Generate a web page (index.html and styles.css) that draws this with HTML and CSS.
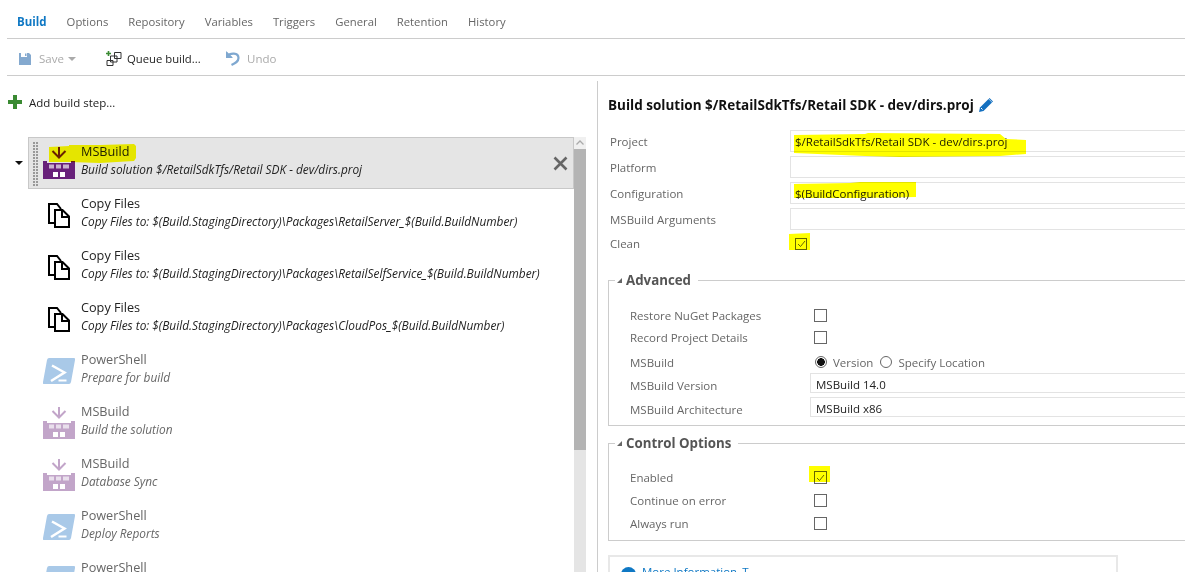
FILE: index.html
```html
<!DOCTYPE html>
<html lang="en">
<head>
<meta charset="utf-8">
<title>Build definition</title>
<link rel="stylesheet" href="styles.css">
</head>
<body>
<svg class="defs" width="0" height="0" aria-hidden="true">
  <symbol id="i-msbuild" viewBox="0 0 32 32">
    <path d="M16 0V10M9.5 4L16 10.5L22.5 4" fill="none" stroke="#68217a" stroke-width="2"/>
    <path d="M0 14H4V16H28V14H32V32H0Z" fill="#68217a"/>
    <path d="M6 17.500H11V21.500H6ZM13 17.500H18V21.500H13ZM20 17.500H26V21.500H20Z" fill="#c9b0d0"/>
    <path d="M10 25H15V30H10ZM17 25H22V30H17Z" fill="#fff"/>
  </symbol>
  <symbol id="i-copy" viewBox="0 0 22 25">
    <path d="M6 20H1V1H9L13 6" fill="none" stroke="#000" stroke-width="2"/>
    <path d="M7 7H14.500L21 13.500V24H7Z" fill="#fff" stroke="#000" stroke-width="2"/>
    <path d="M14 7V14H21" fill="none" stroke="#000" stroke-width="2"/>
  </symbol>
  <symbol id="i-ps" viewBox="0 0 32 26">
    <path d="M6 0H31Q32.500 0 32 2L28 24Q27.500 26 26 26H1Q-.5 26 0 24L4 2Q4.500 0 6 0Z" fill="#a9c9e8"/>
    <path d="M9 7.500L21.500 14.500L8 23" fill="none" stroke="#fff" stroke-width="2.500"/>
    <path d="M15.500 22.500H23.500" fill="none" stroke="#fff" stroke-width="2"/>
  </symbol>
</svg>

<div class="page">
  <nav class="tabs">
    <span class="tab tab-active">Build</span>
    <span class="tab">Options</span>
    <span class="tab">Repository</span>
    <span class="tab">Variables</span>
    <span class="tab">Triggers</span>
    <span class="tab">General</span>
    <span class="tab">Retention</span>
    <span class="tab">History</span>
  </nav>

  <div class="toolbar">
    <span class="tool tool-save">
      <svg class="tool-icon" width="12" height="12" viewBox="0 0 12 12"><path d="M0 0H2V4H8V0H10L12 2V12H0Z" fill="#84a9cf"/><path d="M6 .5H7.500V3H6Z" fill="#84a9cf"/></svg>
      <span class="muted">Save</span>
      <span class="caret"></span>
    </span>
    <span class="tool tool-queue">
      <svg class="tool-icon" width="16" height="15" viewBox="0 0 16 15"><path d="M2.500 0V5M0 2.500H5" stroke="#3a8a32" stroke-width="1.600" fill="none"/><path d="M8.500 1.500H15V7.500H8.500ZM4.500 5H11V11H4.500ZM1 9.500H7V14.500H1Z" fill="#fff" stroke="#333" stroke-width="1"/></svg>
      <span>Queue build...</span>
    </span>
    <span class="tool tool-undo">
      <svg class="tool-icon" width="14" height="15" viewBox="0 0 14 15"><path d="M1 1V6H6" fill="#7fa8d0"/><path d="M1.500 5.500C4 1.500 12.500 1.500 12.500 7C12.500 10.500 9.500 12 5.500 14" fill="none" stroke="#7fa8d0" stroke-width="2.200"/><path d="M0 0L7 7H0Z" fill="#7fa8d0"/></svg>
      <span class="muted">Undo</span>
    </span>
  </div>

  <div class="main">
    <section class="left">
      <div class="add-step">
        <svg width="14" height="14" viewBox="0 0 14 14"><path d="M5 0H9V5H14V9H9V14H5V9H0V5H5Z" fill="#3a8a32"/></svg>
        <span>Add build step...</span>
      </div>
      <div class="list-wrap">
        <div class="twisty"><span class="twisty-arrow"></span></div>
        <div class="steps">
          <div class="step step-selected">
            <span class="grip"></span>
            <div class="step-icon"><svg width="32" height="32"><use href="#i-msbuild"/></svg></div>
            <div class="step-text">
              <div class="step-title">MSBuild</div>
              <div class="step-sub">Build solution $/RetailSdkTfs/Retail SDK - dev/dirs.proj</div>
            </div>
            <svg class="step-close" width="15" height="15" viewBox="0 0 15 15"><path d="M1.500 1.500L13.500 13.500M13.500 1.500L1.500 13.500" stroke="#666" stroke-width="2.600" fill="none"/></svg>
          </div>
          <div class="step">
            <div class="step-icon"><svg width="22" height="25"><use href="#i-copy"/></svg></div>
            <div class="step-text">
              <div class="step-title">Copy Files</div>
              <div class="step-sub">Copy Files to: $(Build.StagingDirectory)\Packages\RetailServer_$(Build.BuildNumber)</div>
            </div>
          </div>
          <div class="step">
            <div class="step-icon"><svg width="22" height="25"><use href="#i-copy"/></svg></div>
            <div class="step-text">
              <div class="step-title">Copy Files</div>
              <div class="step-sub">Copy Files to: $(Build.StagingDirectory)\Packages\RetailSelfService_$(Build.BuildNumber)</div>
            </div>
          </div>
          <div class="step">
            <div class="step-icon"><svg width="22" height="25"><use href="#i-copy"/></svg></div>
            <div class="step-text">
              <div class="step-title">Copy Files</div>
              <div class="step-sub">Copy Files to: $(Build.StagingDirectory)\Packages\CloudPos_$(Build.BuildNumber)</div>
            </div>
          </div>
          <div class="step step-dim">
            <div class="step-icon"><svg width="32" height="26"><use href="#i-ps"/></svg></div>
            <div class="step-text">
              <div class="step-title">PowerShell</div>
              <div class="step-sub">Prepare for build</div>
            </div>
          </div>
          <div class="step step-dim">
            <div class="step-icon icon-faded"><svg width="32" height="32"><use href="#i-msbuild"/></svg></div>
            <div class="step-text">
              <div class="step-title">MSBuild</div>
              <div class="step-sub">Build the solution</div>
            </div>
          </div>
          <div class="step step-dim">
            <div class="step-icon icon-faded"><svg width="32" height="32"><use href="#i-msbuild"/></svg></div>
            <div class="step-text">
              <div class="step-title">MSBuild</div>
              <div class="step-sub">Database Sync</div>
            </div>
          </div>
          <div class="step step-dim">
            <div class="step-icon"><svg width="32" height="26"><use href="#i-ps"/></svg></div>
            <div class="step-text">
              <div class="step-title">PowerShell</div>
              <div class="step-sub">Deploy Reports</div>
            </div>
          </div>
          <div class="step step-dim">
            <div class="step-icon"><svg width="32" height="26"><use href="#i-ps"/></svg></div>
            <div class="step-text">
              <div class="step-title">PowerShell</div>
              <div class="step-sub">&nbsp;</div>
            </div>
          </div>
        </div>
        <div class="scrollbar">
          <div class="scroll-up"><svg width="12" height="12" viewBox="0 0 12 12"><path d="M2.500 7.500L6 4L9.500 7.500" fill="none" stroke="#aaa" stroke-width="1.300"/></svg></div>
          <div class="scroll-thumb"></div>
        </div>
      </div>
    </section>

    <section class="right">
      <h2 class="title">Build solution $/RetailSdkTfs/Retail SDK - dev/dirs.proj
        <svg class="pencil" width="14" height="14" viewBox="0 0 14 14"><path d="M0 14L1 9.500L9.500 1L13 4.500L4.500 13Z" fill="#1470c0"/><path d="M10.500 0L14 3.500L13.300 4.200L9.800 .7Z" fill="#1470c0"/><path d="M2 10L3.500 11.500" stroke="#fff" stroke-width="1"/></svg>
      </h2>

      <div class="form-top">
        <label class="lbl">Project</label><div class="field">$/RetailSdkTfs/Retail SDK - dev/dirs.proj</div>
        <label class="lbl">Platform</label><div class="field"></div>
        <label class="lbl">Configuration</label><div class="field">$(BuildConfiguration)</div>
        <label class="lbl">MSBuild Arguments</label><div class="field"></div>
        <label class="lbl">Clean</label><div class="check-cell"><span class="check check-on"><svg width="9" height="8" viewBox="0 0 9 8"><path d="M1 4L3.500 6.500L8 1" fill="none" stroke="#666" stroke-width="1"/></svg></span></div>
      </div>

      <fieldset class="group group-adv">
        <legend class="legend"><span class="legend-arrow"></span>Advanced</legend>
        <div class="group-grid">
          <label class="lbl">Restore NuGet Packages</label><div class="check-cell"><span class="check"></span></div>
          <label class="lbl">Record Project Details</label><div class="check-cell"><span class="check"></span></div>
          <label class="lbl lbl-low">MSBuild</label>
          <div class="radios">
            <span class="radio radio-on"></span><span class="radio-text">Version</span>
            <span class="radio"></span><span class="radio-text">Specify Location</span>
          </div>
          <label class="lbl">MSBuild Version</label><div class="select">MSBuild 14.0</div>
          <label class="lbl">MSBuild Architecture</label><div class="select">MSBuild x86</div>
        </div>
      </fieldset>

      <fieldset class="group group-ctrl">
        <legend class="legend"><span class="legend-arrow"></span>Control Options</legend>
        <div class="group-grid grid-ctrl">
          <label class="lbl">Enabled</label><div class="check-cell"><span class="check check-on"><svg width="9" height="8" viewBox="0 0 9 8"><path d="M1 4L3.500 6.500L8 1" fill="none" stroke="#666" stroke-width="1"/></svg></span></div>
          <label class="lbl">Continue on error</label><div class="check-cell"><span class="check"></span></div>
          <label class="lbl">Always run</label><div class="check-cell"><span class="check"></span></div>
        </div>
      </fieldset>

      <div class="more">
        <span class="more-icon"></span>
        <span class="more-link">More Information</span>
        <span class="more-link more-t">T</span>
      </div>
    </section>
  </div>

  <svg class="marker" width="1185" height="572" viewBox="0 0 1185 572" aria-hidden="true">
    <path d="M49 147L69 146V145L100 145L134 144L136 146L136 158L134 161L100 163L70 162L49 162Z"/>
    <path d="M794 135L865 134L868 133L1000 134L1006 139L1026 140L1026 154L1000 156L900 157L865 156L794 153Z"/>
    <path d="M794 184L850 183L860 182L916 182L916 197L860 198L794 198Z"/>
    <path d="M789 234L810 233V250L789 250Z"/>
    <path d="M809 466H830V482H809Z"/>
  </svg>
</div>
</body>
</html>
```
FILE: styles.css
```css
* { box-sizing: border-box; }
html, body { margin: 0; padding: 0; background: #fff; }
body { font-family: "Open Sans", "Noto Sans", "Liberation Sans", sans-serif; font-size: 11.5px; color: #222; }
.defs { position: absolute; }

.page { position: relative; width: 1185px; height: 572px; overflow: hidden; }

.tabs { display: flex; align-items: center; gap: 20px; height: 39px; margin-left: 7px; padding: 5px 0 0 10px; border-bottom: 1px solid #ccc; }
.tab { color: #666; font-size: 11.3px; }
.tab-active { color: #0f78c4; font-weight: 700; font-size: 11.5px; }

.toolbar { display: flex; align-items: center; height: 37px; margin-left: 7px; padding: 3px 0 0 12px; border-bottom: 1px solid #ccc; }
.tool { display: flex; align-items: center; }
.tool-save { gap: 8px; width: 87px; }
.tool-queue { gap: 5px; width: 120px; font-size: 11.3px; }
.tool-undo { gap: 7px; }
.muted { color: #aaa; }
.caret { width: 0; height: 0; margin-left: -4px; border: 4px solid transparent; border-top: 4px solid #aaa; border-bottom: 0; }

.main { display: flex; height: 496px; padding-top: 5px; }
.left { width: 597px; flex: none; }
.add-step { display: flex; align-items: center; gap: 7px; height: 42px; padding-left: 8px; color: #222; }
.list-wrap { display: flex; margin-top: 14px; height: 435px; }
.twisty { width: 28px; flex: none; padding: 24px 0 0 15px; }
.twisty-arrow { display: block; width: 0; height: 0; border: 4px solid transparent; border-top: 4px solid #111; border-bottom: 0; }

.steps { width: 546px; flex: none; }
.step { position: relative; display: flex; align-items: center; gap: 6px; height: 52px; padding-left: 14px; border: 1px solid transparent; }
.step-selected { background: #e5e5e5; border-color: #c8c8c8; }
.grip { position: absolute; left: 4px; top: 4px; width: 6px; height: 44px; background-image: radial-gradient(circle at 1px 1px, #999 1.1px, transparent 1.2px); background-size: 3px 3px; }
.step-icon { display: flex; align-items: center; justify-content: center; width: 32px; height: 32px; flex: none; }
.icon-faded { opacity: .4; }
.step-text { min-width: 0; white-space: nowrap; padding-bottom: 7px; }
.step-title { line-height: 18px; font-size: 12.7px; color: #222; }
.step-sub { line-height: 18px; font-size: 11.85px; font-style: italic; color: #222; }
.step-dim .step-title, .step-dim .step-sub { color: #666; }
.step-close { margin-left: auto; margin-right: 5px; flex: none; }

.scrollbar { width: 12px; flex: none; background: #e5e5e5; }
.scroll-up { height: 12px; background: #f0f0f0; }
.scroll-thumb { height: 301px; background: #b4b4b4; }

.right { flex: 1; min-width: 0; padding-left: 10px; border-left: 1px solid #ccc; }
.title { display: flex; align-items: center; gap: 5px; margin: 0; height: 49px; padding-bottom: 2px; font-size: 13.5px; font-weight: 700; color: #111; white-space: nowrap; }
.pencil { flex: none; }

.lbl { color: #666; padding-left: 2px; }
.lbl-low { padding-top: 3px; }
.form-top { display: grid; grid-template-columns: 182px 1fr; grid-template-rows: 22px 22px 22px 22px 19px; row-gap: 4px; align-items: center; margin-right: -10px; }
.field { height: 22px; line-height: 22px; padding-left: 4px; border: 1px solid #e3e3e3; border-right: 0; color: #222; }
.check-cell { display: flex; align-items: center; }
.form-top .check { margin-left: 5px; width: 12px; height: 12px; }
.check { display: flex; align-items: center; justify-content: center; width: 13px; height: 13px; border: 1px solid #666; background: #fff; }
.check-on { border-color: #666; }

.group { margin: 0 -10px 0 0; padding: 0; border: 1px solid #ccc; border-right: 0; min-width: 0; }
.group-adv { margin-top: 18px; }
.group-ctrl { margin-top: 8px; }
.legend { display: flex; align-items: center; gap: 4px; margin-left: 6px; padding: 0 7px 0 2px; font-size: 13.3px; font-weight: 700; color: #555; line-height: 18px; }
.legend-arrow { width: 0; height: 0; border-left: 5px solid transparent; border-bottom: 5px solid #666; }

.group-grid { display: grid; grid-template-columns: 182px 1fr; grid-template-rows: 22px 22px 25px 24px 24px; align-items: center; padding: 15px 0 4px 19px; }
.grid-ctrl { grid-template-rows: 23px 23px 23px; padding: 14px 0 5px 19px; }
.group-grid .check { margin-left: 4px; }
.radios { display: flex; align-items: center; padding: 3px 0 0 5px; color: #666; }
.radio { width: 12px; height: 12px; border: 1px solid #666; border-radius: 50%; background: #fff; flex: none; }
.radio-on { background: radial-gradient(circle, #111 3.6px, #fff 4px); }
.radio-text { margin: 0 7px 0 6px; }
.select { height: 20px; margin-bottom: 4px; line-height: 22px; padding-left: 5px; border: 1px solid #e3e3e3; border-right: 0; color: #222; }

.more { display: flex; align-items: flex-start; gap: 6px; width: 510px; height: 40px; margin-top: 14px; padding: 10px 0 0 11px; border: 2px solid #e8e8e8; color: #0f78c4; }
.more-icon { width: 15px; height: 15px; border-radius: 50%; background: #0f78c4; flex: none; }
.more-link { line-height: 18px; margin-top: -4px; font-size: 11.5px; }
.more-t { margin-left: -1px; }

.marker { position: absolute; left: 0; top: 0; mix-blend-mode: multiply; pointer-events: none; }
.marker path { fill: #ffff00; }
```
